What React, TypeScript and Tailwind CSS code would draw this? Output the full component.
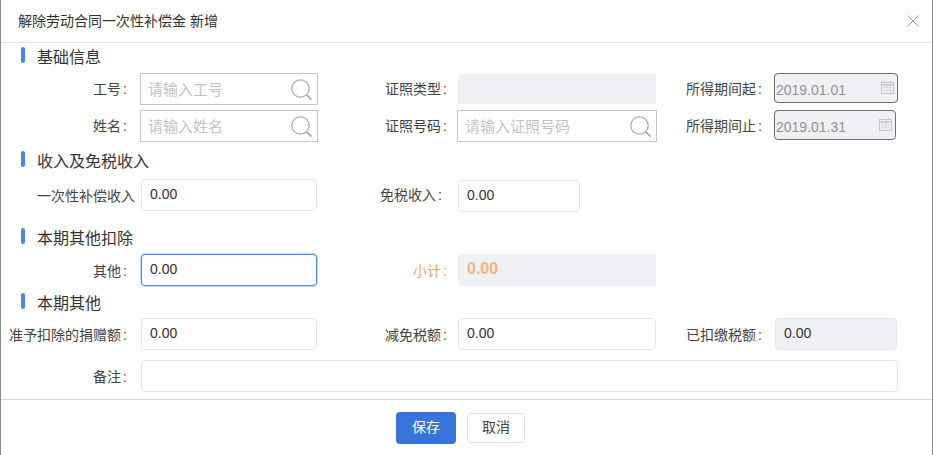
const font = { fontFamily: '"Liberation Sans", "Noto Sans CJK SC", sans-serif' };

const SearchIcon = () => (
  <svg width="21" height="21" viewBox="0 0 21 21" fill="none" stroke="#adadad" className="shrink-0">
    <circle cx="9.5" cy="9.5" r="8.7" strokeWidth="1.3" />
    <path d="M15.6 15.8 L20.6 20.6" strokeWidth="1.8" />
  </svg>
);

const CalendarIcon = () => (
  <svg width="13" height="13" viewBox="0 0 13 13" fill="none" className="shrink-0 mb-[1px]">
    <rect x="0.5" y="1.5" width="12" height="11" stroke="#c6c6c6" />
    <path d="M1 4 H12" stroke="#c6c6c6" strokeWidth="1.5" />
    <path d="M3 0 V2 M10 0 V2" stroke="#c6c6c6" />
    <path d="M2.5 6.5 H4.5 M5.5 6.5 H7.5 M8.5 6.5 H10.5 M2.5 9.5 H4.5 M5.5 9.5 H7.5 M8.5 9.5 H10.5" stroke="#d0d0d0" strokeWidth="1.5" />
  </svg>
);

const SectionTitle = ({ title, className }: { title: string; className: string }) => (
  <div className={`flex items-center h-[16px] pl-[20px] ${className}`}>
    <span className="w-[4px] h-[16px] rounded-full bg-[#4488f5]" />
    <span className="ml-[12px] mt-[5px] text-[16px] text-[#333333] whitespace-nowrap">{title}</span>
  </div>
);

const Label = ({ text, className }: { text: string; className: string }) => {
  const hasColon = text.endsWith(":");
  return (
    <div className={`shrink-0 text-right text-[14px] text-[#444444] whitespace-nowrap ${className}`}>
      {hasColon ? text.slice(0, -1) : text}
      {hasColon && <span className="ml-[2px]">:</span>}
    </div>
  );
};

const SearchBox = ({ placeholder, className }: { placeholder: string; className: string }) => (
  <div className={`flex items-center h-[32px] border border-[#c6c6c6] bg-white pl-[7px] pr-[5px] ${className}`}>
    <input placeholder={placeholder} className="min-w-0 flex-1 pt-[2px] text-[15px] outline-none placeholder:text-[#c4c4c4]" />
    <SearchIcon />
  </div>
);

const NumberBox = ({ value, className }: { value: string; className: string }) => (
  <input
    defaultValue={value}
    className={`h-[32px] rounded-[4px] border border-[#e4e6ea] bg-white px-[8px] pb-[2px] text-[14px] text-[#333333] outline-none ${className}`}
  />
);

const DateBox = ({ value, className }: { value: string; className: string }) => (
  <div className={`flex items-center self-start h-[30px] rounded-[4px] border border-[#6e6e6e] bg-[#f0f1f5] pl-[1px] pr-[3px] ${className}`}>
    <span className="flex-1 text-[14px] text-[#929292] pt-[5px]">{value}</span>
    <CalendarIcon />
  </div>
);

export default function App() {
  return (
    <div style={font} className="w-[933px] h-[455px] overflow-hidden bg-white border-l border-r border-[#8a8a8a] flex flex-col">
      {/* header */}
      <div className="flex items-center justify-between h-[43px] shrink-0 border-b border-[#e4e4e4] pl-[17px] pr-[13px]">
        <span className="text-[14px] text-[#333333] whitespace-nowrap">解除劳动合同一次性补偿金 新增</span>
        <svg width="12" height="12" viewBox="0 0 12 12" stroke="#a0a0a0" strokeWidth="1" fill="none">
          <path d="M0.5 0.5 L11.5 11.5 M11.5 0.5 L0.5 11.5" />
        </svg>
      </div>

      {/* form */}
      <div className="flex-1">
        <SectionTitle title="基础信息" className="mt-[4px]" />

        <div className="flex items-center mt-[10px] h-[32px]">
          <Label text="工号:" className="w-[126px]" />
          <SearchBox placeholder="请输入工号" className="w-[178px] ml-[13px]" />
          <Label text="证照类型:" className="w-[129px]" />
          <div className="w-[198px] h-[30px] ml-[11px] bg-[#f0f1f5]" />
          <Label text="所得期间起:" className="w-[106px]" />
          <DateBox value="2019.01.01" className="w-[124px] ml-[12px]" />
        </div>

        <div className="flex items-center mt-[5px] h-[32px]">
          <Label text="姓名:" className="w-[126px]" />
          <SearchBox placeholder="请输入姓名" className="w-[178px] ml-[13px]" />
          <Label text="证照号码:" className="w-[129px]" />
          <SearchBox placeholder="请输入证照号码" className="w-[200px] ml-[10px]" />
          <Label text="所得期间止:" className="w-[105px]" />
          <DateBox value="2019.01.31" className="w-[122px] ml-[12px]" />
        </div>

        <SectionTitle title="收入及免税收入" className="mt-[9px]" />

        <div className="flex items-center mt-[12px] h-[32px]">
          <Label text="一次性补偿收入" className="w-[134px] pt-[3px]" />
          <NumberBox value="0.00" className="w-[176px] ml-[6px]" />
          <Label text="免税收入:" className="w-[125px]" />
          <NumberBox value="0.00" className="w-[122px] ml-[16px] mt-[2px]" />
        </div>

        <SectionTitle title="本期其他扣除" className="mt-[17px]" />

        <div className="flex items-center mt-[10px] h-[32px]">
          <Label text="其他:" className="w-[126px] pt-[3px]" />
          <NumberBox value="0.00" className="w-[176px] ml-[14px] !pb-[3px] !border-[#4a8af4] shadow-[0_0_0_1px_rgba(74,138,244,0.35)]" />
          <Label text="小计:" className="w-[130px] pt-[3px] !text-[#f5a84a]" />
          <div className="flex items-center w-[198px] h-[32px] ml-[11px] bg-[#f0f1f5] pl-[9px] pb-[3px] text-[16px] font-bold text-[#f7b27a]">0.00</div>
        </div>

        <SectionTitle title="本期其他" className="mt-[7px]" />

        <div className="flex items-center mt-[9px] h-[32px]">
          <Label text="准予扣除的捐赠额:" className="w-[126px] pt-[2px]" />
          <NumberBox value="0.00" className="w-[176px] ml-[14px]" />
          <Label text="减免税额:" className="w-[130px] pt-[2px]" />
          <NumberBox value="0.00" className="w-[198px] ml-[11px]" />
          <Label text="已扣缴税额:" className="w-[106px] pt-[2px]" />
          <NumberBox value="0.00" className="w-[122px] ml-[13px] !bg-[#f0f1f5]" />
        </div>

        <div className="flex items-center mt-[10px] h-[32px]">
          <Label text="备注:" className="w-[126px] pt-[2px]" />
          <NumberBox value="" className="w-[757px] ml-[14px]" />
        </div>
      </div>

      {/* footer */}
      <div className="flex justify-center items-center gap-[11px] h-[56px] shrink-0 border-t border-[#d8d8d8] pr-[12px]">
        <button className="w-[60px] h-[32px] rounded-[4px] bg-[#3775dd] text-[14px] text-white">保存</button>
        <button className="w-[58px] h-[30px] rounded-[4px] border border-[#dcdfe6] bg-white text-[14px] text-[#444444]">取消</button>
      </div>
    </div>
  );
}
